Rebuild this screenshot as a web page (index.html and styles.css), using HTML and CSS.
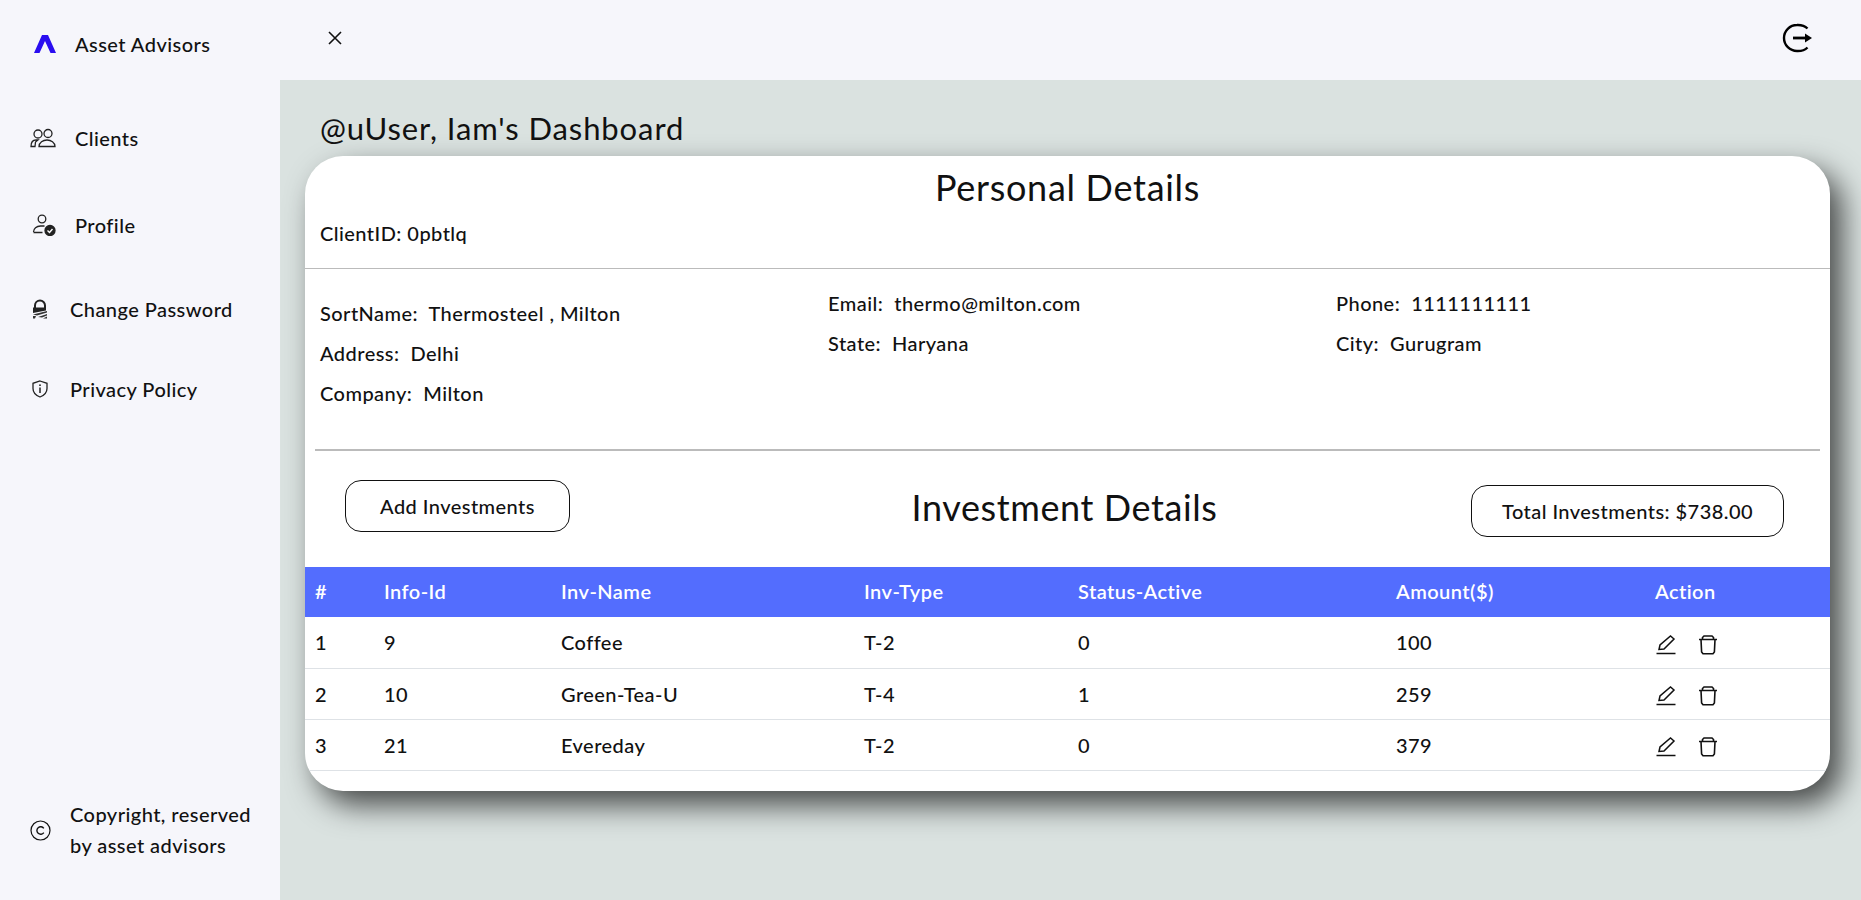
FILE: index.html
```html
<!DOCTYPE html>
<html>
<head>
    <meta charset="utf-8" />
    <title>Asset Advisors</title>
    <link rel="stylesheet" href="styles.css">
</head>
<body>
<div class="app">
    <div class="sidebar">
        <div class="nav">
            <div class="nav-item brand">
                <svg class="icon" width="24" height="20" viewBox="0 0 24 20"><path d="M1 19 9 1h6l8 18h-5.500L12 7 6.500 19z" fill="#2a0df0"/></svg>
                <span>Asset Advisors</span>
            </div>
            <div class="nav-item clients">
                <svg class="icon" width="26" height="20" viewBox="0 0 26 20" fill="none" stroke="#222" stroke-width="1.300"><circle cx="8" cy="6" r="4"/><circle cx="18" cy="5.500" r="4"/><path d="M1 18.500c0-4 1.500-6.500 5-6.500h2l-2.500 2-.5 4.500zM9 18.500c0-4 4-6.500 8-6.500s8 2.500 8 6.500z"/></svg>
                <span>Clients</span>
            </div>
            <div class="nav-item profile">
                <svg class="icon" width="24" height="22" viewBox="0 0 24 22" fill="none" stroke="#222" stroke-width="1.300"><circle cx="10" cy="5" r="3.800"/><path d="M1.500 18c0-3.500 3-6 7-6h4M1.500 18.500h9"/><circle cx="18" cy="16.500" r="5" fill="#222"/><path d="m15.500 16.500 2 2 3-3.500" stroke="#fff" stroke-width="1.400"/></svg>
                <span>Profile</span>
            </div>
            <div class="nav-item sub password">
                <svg class="icon" width="16" height="20" viewBox="0 0 16 20"><path d="M3 9V6.500a5 5 0 0 1 10 0V9" fill="none" stroke="#222" stroke-width="2"/><path d="M1 8.500h13v3L1 14z" fill="#222"/><path d="M1 15.500 15 12v1.500L5 16.500zM6 18l9-3v1.500L10 18.500zM1 17h3l-1 2.500H1zM11 19.500l4-2v2z" fill="#333"/></svg>
                <span>Change Password</span>
            </div>
            <div class="nav-item sub privacy">
                <svg class="icon" width="16" height="18" viewBox="0 0 16 18" fill="none" stroke="#222" stroke-width="1.300"><path d="M8 1 15 3.300v5.200c0 4-3 7-7 8.500-4-1.500-7-4.500-7-8.500V3.300z"/><path d="M8 7.500V13" stroke-width="1.500"/><circle cx="8" cy="5.200" r=".9" fill="#222" stroke="none"/></svg>
                <span>Privacy Policy</span>
            </div>
        </div>
        <div class="copyright">
            <svg class="icon" width="21" height="21" viewBox="0 0 21 21" fill="none" stroke="#111" stroke-width="1.200"><circle cx="10.500" cy="10.500" r="9.500"/><path d="M13.800 8.300a3.800 3.800 0 1 0 0 4.400" stroke-width="1.400"/></svg>
            <span>Copyright, reserved<br>by asset advisors</span>
        </div>
    </div>
    <div class="main">
        <div class="topbar">
            <svg class="close" width="16" height="16" viewBox="0 0 16 16" fill="none" stroke="#111" stroke-width="1.600"><path d="M2 2 14 14M14 2 2 14"/></svg>
            <svg class="logout" width="30" height="30" viewBox="0 0 30 30" fill="none" stroke="#000" stroke-width="2.400"><path d="M25.500 5.500C23 3 20 1.800 15 2A13 13 0 0 0 15 28C20 28.200 23 27 25.500 24.500"/><path d="M11 15h14" stroke-width="2.800"/><path d="M23 10.500 30 15l-7 4.500z" fill="#000" stroke="none"/></svg>
        </div>
        <div class="content">
            <h2 class="page-title">@uUser, Iam's Dashboard</h2>
            <div class="card">
                <h1 class="card-title">Personal Details</h1>
                <p class="client-id">ClientID: 0pbtlq</p>
                <div class="details">
                    <div class="col first">
                        <p>SortName:&nbsp; Thermosteel , Milton</p>
                        <p>Address:&nbsp; Delhi</p>
                        <p>Company:&nbsp; Milton</p>
                    </div>
                    <div class="col">
                        <p>Email:&nbsp; thermo@milton.com</p>
                        <p>State:&nbsp; Haryana</p>
                    </div>
                    <div class="col">
                        <p>Phone:&nbsp; 1111111111</p>
                        <p>City:&nbsp; Gurugram</p>
                    </div>
                </div>
                <div class="divider"></div>
                <div class="inv-head">
                    <button class="btn add-btn">Add Investments</button>
                    <h1 class="inv-title">Investment Details</h1>
                    <button class="btn total-btn">Total Investments: $738.00</button>
                </div>
                <table class="inv-table">
                    <thead>
                        <tr>
                            <th class="c-num">#</th>
                            <th class="c-id">Info-Id</th>
                            <th class="c-name">Inv-Name</th>
                            <th class="c-type">Inv-Type</th>
                            <th class="c-status">Status-Active</th>
                            <th class="c-amount">Amount($)</th>
                            <th>Action</th>
                        </tr>
                    </thead>
                    <tbody>
                        <tr>
                            <td>1</td><td>9</td><td>Coffee</td><td>T-2</td><td>0</td><td>100</td>
                            <td class="actions">
                                <svg width="20" height="20" viewBox="0 0 20 20" fill="none" stroke="#111" stroke-width="1.500"><path d="M3 14.500 4 10 14.500 1 18 4 8 14z"/><path d="M0.500 18.500h19"/></svg>
                                <svg width="20" height="20" viewBox="0 0 20 20" fill="none" stroke="#111" stroke-width="1.600"><path d="M1 4.500h18M4.500 4.500V2.500l1.500-1.500h8l1.500 1.500v2M3 4.500l.6 12.500 1.400 1.800h10l1.400-1.800.6-12.500"/></svg>
                            </td>
                        </tr>
                        <tr>
                            <td>2</td><td>10</td><td>Green-Tea-U</td><td>T-4</td><td>1</td><td>259</td>
                            <td class="actions">
                                <svg width="20" height="20" viewBox="0 0 20 20" fill="none" stroke="#111" stroke-width="1.500"><path d="M3 14.500 4 10 14.500 1 18 4 8 14z"/><path d="M0.500 18.500h19"/></svg>
                                <svg width="20" height="20" viewBox="0 0 20 20" fill="none" stroke="#111" stroke-width="1.600"><path d="M1 4.500h18M4.500 4.500V2.500l1.500-1.500h8l1.500 1.500v2M3 4.500l.6 12.500 1.400 1.800h10l1.400-1.800.6-12.500"/></svg>
                            </td>
                        </tr>
                        <tr>
                            <td>3</td><td>21</td><td>Evereday</td><td>T-2</td><td>0</td><td>379</td>
                            <td class="actions">
                                <svg width="20" height="20" viewBox="0 0 20 20" fill="none" stroke="#111" stroke-width="1.500"><path d="M3 14.500 4 10 14.500 1 18 4 8 14z"/><path d="M0.500 18.500h19"/></svg>
                                <svg width="20" height="20" viewBox="0 0 20 20" fill="none" stroke="#111" stroke-width="1.600"><path d="M1 4.500h18M4.500 4.500V2.500l1.500-1.500h8l1.500 1.500v2M3 4.500l.6 12.500 1.400 1.800h10l1.400-1.800.6-12.500"/></svg>
                            </td>
                        </tr>
                    </tbody>
                </table>
            </div>
        </div>
    </div>
</div>
</body>
</html>
```

FILE: styles.css
```css
* {
    box-sizing: border-box;
}
html, body {
    height: 900px;
}
body {
    margin: 0;
    font-family: "Lato", "Noto Sans", sans-serif;
    font-size: 20px;
    font-weight: 500;
    letter-spacing: 0.45px;
    color: #111;
    background-color: #f6f6fb;
    overflow: hidden;
}
p {
    margin: 0;
}
h1, h2 {
    margin: 0;
    font-weight: 400;
}
.app {
    display: flex;
    height: 900px;
    overflow: hidden;
}
.sidebar {
    width: 280px;
    flex-shrink: 0;
    display: flex;
    flex-direction: column;
    justify-content: space-between;
    padding: 29px 0 39px 30px;
    background-color: #f6f6fb;
}
.nav-item {
    display: flex;
    align-items: center;
    height: 30px;
}
.nav-item .icon {
    flex-shrink: 0;
    margin-right: 19px;
}
.brand .icon {
    margin-left: 3px;
    margin-right: 18px;
}
.clients {
    margin-top: 64px;
}
.profile {
    margin-top: 57px;
}
.profile .icon {
    margin-left: 2px;
    margin-right: 19px;
}
.password {
    margin-top: 54px;
}
.privacy {
    margin-top: 50px;
}
.nav-item.sub .icon {
    margin-left: 2px;
    margin-right: 22px;
}
.copyright {
    display: flex;
    align-items: center;
    line-height: 31px;
}
.copyright .icon {
    margin-right: 19px;
}
.main {
    flex: 1;
    min-width: 0;
    display: flex;
    flex-direction: column;
}
.topbar {
    height: 80px;
    flex-shrink: 0;
    display: flex;
    align-items: center;
    justify-content: space-between;
    padding: 0 49px 5px 47px;
}
.content {
    flex: 1;
    padding: 29px 31px 0 25px;
    background-color: #dae2e0;
}
.page-title {
    padding-left: 15px;
    font-size: 31px;
    line-height: 38px;
    letter-spacing: 0.9px;
    color: #111;
}
.card {
    margin-top: 9px;
    height: 635px;
    background-color: #fff;
    border-radius: 38px;
    box-shadow: 12px 14px 30px rgba(0, 0, 0, 0.68);
    overflow: hidden;
}
.card-title {
    padding-top: 8px;
    font-size: 36px;
    line-height: 46px;
    letter-spacing: 0.7px;
    text-align: center;
}
.client-id {
    padding: 10px 15px 20px;
    line-height: 26px;
    height: 59px;
    border-bottom: 1px solid #bbb;
}
.details {
    display: flex;
    height: 180px;
    padding-top: 9px;
    padding-left: 15px;
}
.col {
    flex: 0 0 508px;
}
.col:last-child {
    flex: 1;
}
.col p {
    height: 40px;
    line-height: 50px;
}
.col.first {
    padding-top: 10px;
}
.divider {
    height: 2px;
    margin: 0 10px;
    background-color: #bbb;
}
.inv-head {
    display: grid;
    grid-template-columns: 1fr auto 1fr;
    align-items: center;
    height: 116px;
    padding: 0 46px 0 40px;
}
.inv-title {
    font-size: 36px;
    line-height: 46px;
    letter-spacing: 0.6px;
    margin-top: -4px;
}
.btn {
    height: 52px;
    padding: 0;
    font-family: inherit;
    font-size: 20px;
    font-weight: 500;
    letter-spacing: 0.45px;
    color: #111;
    background-color: #fff;
    border: 1px solid #111;
    border-radius: 16px;
}
.add-btn {
    width: 225px;
    margin-top: -6px;
    justify-self: start;
}
.total-btn {
    width: 313px;
    margin-top: 4px;
    justify-self: end;
}
.inv-table {
    width: 100%;
    border-collapse: collapse;
    table-layout: fixed;
}
.inv-table th {
    height: 50px;
    padding: 0 0 2px 10px;
    font-weight: 600;
    text-align: left;
    color: #fff;
    background-color: #536dfe;
}
.inv-table td {
    height: 51px;
    padding: 0 0 0 10px;
    border-bottom: 1px solid #dee2e6;
}
.c-num {
    width: 69px;
}
.c-id {
    width: 177px;
}
.c-name {
    width: 303px;
}
.c-type {
    width: 214px;
}
.c-status {
    width: 318px;
}
.c-amount {
    width: 259px;
}
.actions svg {
    display: inline-block;
    vertical-align: middle;
}
.actions svg:first-child {
    margin-left: 1px;
    margin-right: 16px;
}
```
